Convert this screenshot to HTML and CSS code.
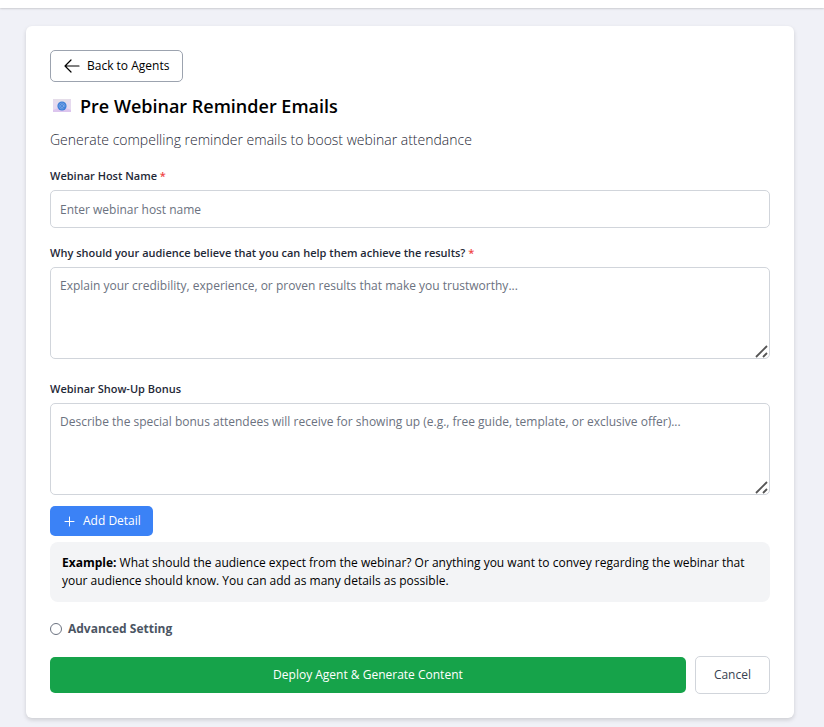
FILE: index.html
```html
<!DOCTYPE html>
<html lang="en">
<head>
<meta charset="UTF-8" />
<meta name="viewport" content="width=device-width, initial-scale=1" />
<title>Pre Webinar Reminder Emails</title>
<link rel="stylesheet" href="styles.css">
</head>
<body>

<header class="topbar"></header>

<main class="card">
  <button type="button" class="btn btn-back">
    <svg width="16" height="14" viewBox="0 0 16 14" fill="none" stroke="currentColor" stroke-width="1.2" stroke-linecap="round" stroke-linejoin="round" aria-hidden="true">
      <path d="M7 1L1 7l6 6M1 7h14" />
    </svg>
    Back to Agents
  </button>

  <h1>
    <svg class="mail-icon" width="18" height="14" viewBox="0 0 18 14" aria-hidden="true">
      <rect width="18" height="13" fill="#e6daef" />
      <path d="M0 13V11L5 9h8l5 2v2z" fill="#dcc5ee" />
      <path d="M0 0h18L13 4H5z" fill="#e5dde9" />
      <circle cx="9" cy="7" r="4.6" fill="#3f80d8" />
      <circle cx="9" cy="7" r="1.5" fill="none" stroke="#8fb0ea" stroke-width="0.7" />
      <path d="M10.5 5.700v1.600c0 1 1.400 .8 1.400-.4a2.900 2.900 0 1 0-1.300 2.500" fill="none" stroke="#8fb0ea" stroke-width="0.6" />
    </svg>
    Pre Webinar Reminder Emails
  </h1>
  <p class="subtitle">Generate compelling reminder emails to boost webinar attendance</p>

  <form id="agentForm">
    <div class="field">
      <label for="hostName">Webinar Host Name <span class="required">*</span></label>
      <input type="text" id="hostName" placeholder="Enter webinar host name" required />
    </div>

    <div class="field">
      <label for="credibility">Why should your audience believe that you can help them achieve the results? <span class="required">*</span></label>
      <textarea id="credibility" placeholder="Explain your credibility, experience, or proven results that make you trustworthy..." required></textarea>
    </div>

    <div class="field field-last">
      <label for="bonus">Webinar Show-Up Bonus</label>
      <textarea id="bonus" placeholder="Describe the special bonus attendees will receive for showing up (e.g., free guide, template, or exclusive offer)..."></textarea>
    </div>

    <button type="button" class="btn btn-add">
      <svg width="11" height="11" viewBox="0 0 11 11" stroke="currentColor" stroke-width="1" stroke-linecap="round" aria-hidden="true">
        <path d="M5.500 1v9M1 5.500h9" />
      </svg>
      Add Detail
    </button>

    <p class="example"><strong>Example:</strong> What should the audience expect from the webinar? Or anything you want to convey regarding the webinar that your audience should know. You can add as many details as possible.</p>

    <div class="advanced">
      <input type="radio" id="advanced" name="advanced" />
      <label for="advanced">Advanced Setting</label>
    </div>

    <div class="actions">
      <button type="submit" class="btn btn-deploy">Deploy Agent &amp; Generate Content</button>
      <button type="button" class="btn btn-cancel">Cancel</button>
    </div>
  </form>
</main>

</body>
</html>
```
FILE: styles.css
```css
* {
  box-sizing: border-box;
}
body {
  font-family: "Open Sans", sans-serif;
  font-size: 12px;
  line-height: 18px;
  background: #f0f1f7;
  color: #000;
  margin: 0;
}
.topbar {
  height: 8px;
  background: #fff;
  box-shadow: 0 1px 2px rgba(0,0,0,0.15);
}
.card {
  background: #fff;
  margin: 18px 30px 9px 26px;
  padding: 24px;
  border-radius: 6px;
  box-shadow: 0 2px 4px rgba(0,0,0,0.15);
}
.btn {
  display: flex;
  align-items: center;
  justify-content: center;
  font-family: inherit;
  font-size: 12px;
  line-height: 18px;
  border: none;
  border-radius: 5px;
  cursor: pointer;
}
.btn-back {
  gap: 7px;
  height: 32px;
  padding: 0 13px;
  background: #fff;
  color: #000;
  font-weight: 500;
  border: 1px solid #9ca3af;
}
h1 {
  display: flex;
  align-items: center;
  gap: 9px;
  margin: 10px 0;
  font-size: 18px;
  line-height: 28px;
  font-weight: 600;
}
.mail-icon {
  margin-left: 3px;
}
.subtitle {
  margin: 0 0 17px;
  font-size: 14px;
  line-height: 20px;
  font-weight: 300;
  color: #1f2937;
}
.field {
  margin-bottom: 16px;
}
.field:has(textarea) {
  padding-bottom: 5px;
}
.field-last {
  margin-bottom: 6px;
}
.field label {
  display: block;
  margin-bottom: 5px;
  font-size: 11px;
  line-height: 18px;
  font-weight: 600;
  color: #1f2937;
}
.field .required {
  color: #ef4444;
}
input[type="text"], textarea {
  display: block;
  width: 100%;
  padding: 9px;
  font-family: inherit;
  font-size: 12px;
  line-height: 18px;
  background: #fff;
  border: 1px solid #d1d5db;
  border-radius: 5px;
}
input[type="text"] {
  height: 38px;
}
textarea {
  height: 92px;
  resize: vertical;
}
textarea::-webkit-resizer {
  background: url("data:image/svg+xml,%3Csvg xmlns='http://www.w3.org/2000/svg' width='15' height='15' stroke='%23555' stroke-width='1.8'%3E%3Cpath d='M2 14L13 3M9 14l4-4'/%3E%3C/svg%3E") no-repeat;
}
input::placeholder, textarea::placeholder {
  color: #6b7280;
}
.btn-add {
  gap: 8px;
  height: 30px;
  padding: 0 12px 0 14px;
  background: #3b82f6;
  color: #fff;
}
.example {
  margin: 6px 0 18px;
  padding: 12px;
  background: #f3f4f6;
  border-radius: 8px;
}
.advanced {
  display: flex;
  align-items: center;
  gap: 6px;
  margin-bottom: 18px;
  font-weight: 700;
  color: #4b5563;
}
.advanced input {
  appearance: none;
  width: 12px;
  height: 12px;
  margin: 0;
  border: 1px solid #6b7280;
  border-radius: 50%;
}
.advanced input:checked {
  background: #3b82f6;
}
.actions {
  display: flex;
  align-items: center;
  gap: 9px;
}
.btn-deploy {
  flex: 1;
  height: 36px;
  background: #16a34a;
  color: #fff;
}
.btn-cancel {
  height: 38px;
  padding: 0 18px;
  background: #fff;
  color: #374151;
  border: 1px solid #d1d5db;
}
```
